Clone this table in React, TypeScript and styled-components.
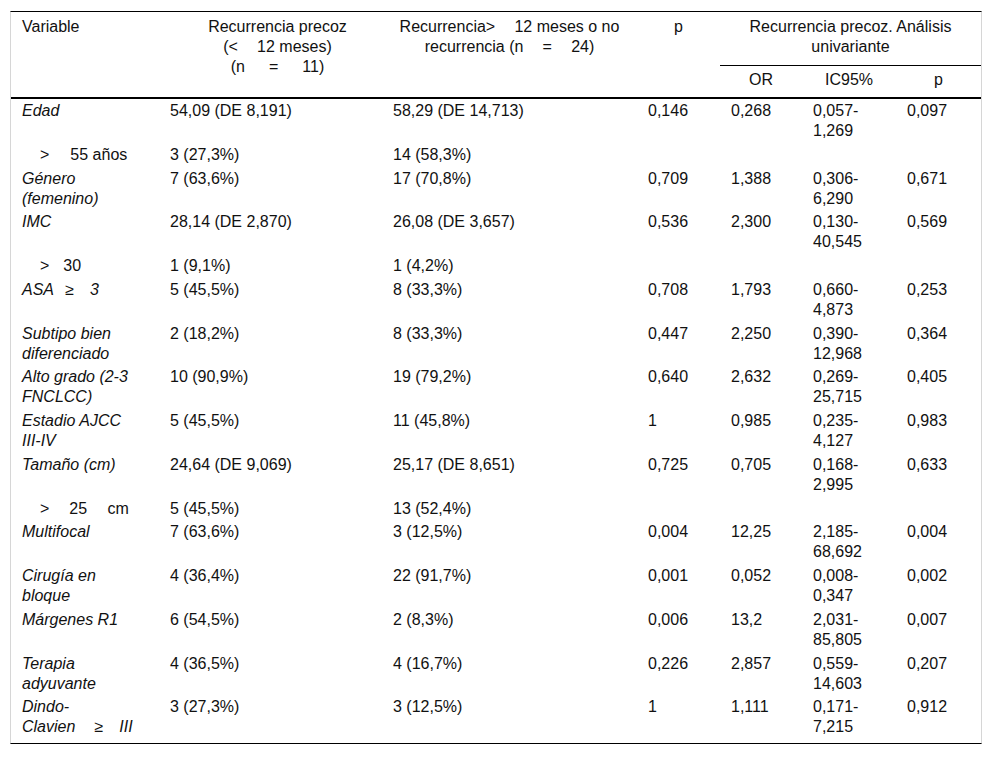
import React from "react";
import styled, { createGlobalStyle } from "styled-components";

const GlobalStyle = createGlobalStyle`
  body {
    margin: 0;
    background: #fff;
    font-family: "Liberation Sans", Arial, sans-serif;
    color: #111;
  }
`;

const Table = styled.table`
  margin: 11px 10px 0;
  width: 972px;
  table-layout: fixed;
  border-collapse: separate;
  border-spacing: 0;
  border-top: 1px solid #000;
  border-bottom: 1px solid #000;
  border-left: 1px solid #d6d6d6;
  border-right: 1px solid #d6d6d6;
  font-size: 16px;
  line-height: 20px;

  tbody tr:last-child td {
    padding-bottom: 6px;
  }
`;

const HeadCell = styled.th<{
  $align?: "left" | "center";
  $split?: boolean;
  $sub?: boolean;
  $shift?: number;
}>`
  font-weight: normal;
  text-align: ${(p) => p.$align || "center"};
  vertical-align: top;
  padding: ${(p) => (p.$sub ? "4px 11px 7px" : "5px 11px 8px")};
  padding-left: ${(p) => 11 + (p.$shift || 0)}px;
  border-bottom: ${(p) => (p.$split ? "1px solid #000" : "2px solid #000")};
  white-space: nowrap;
`;

const Cell = styled.td<{ $first?: boolean; $italic?: boolean }>`
  vertical-align: top;
  padding: ${(p) => (p.$first ? "2px 21px 1.75px 11px" : "2px 11px 1.75px")};
  font-style: ${(p) => (p.$italic ? "italic" : "normal")};
`;

const Indent = styled.span<{ $gap: number }>`
  padding-left: 18px;
  & > b {
    font-weight: normal;
    margin-right: ${(p) => p.$gap}px;
  }
`;

type Row = {
  label: React.ReactNode;
  italic: boolean;
  a: string;
  b: string;
  p?: string;
  or?: string;
  ic?: [string, string];
  p2?: string;
};

const rows: Row[] = [
  { label: "Edad", italic: true, a: "54,09 (DE 8,191)", b: "58,29 (DE 14,713)", p: "0,146", or: "0,268", ic: ["0,057-", "1,269"], p2: "0,097" },
  { label: <Indent $gap={21}><b>&gt;</b>55 años</Indent>, italic: false, a: "3 (27,3%)", b: "14 (58,3%)" },
  { label: "Género (femenino)", italic: true, a: "7 (63,6%)", b: "17 (70,8%)", p: "0,709", or: "1,388", ic: ["0,306-", "6,290"], p2: "0,671" },
  { label: "IMC", italic: true, a: "28,14 (DE 2,870)", b: "26,08 (DE 3,657)", p: "0,536", or: "2,300", ic: ["0,130-", "40,545"], p2: "0,569" },
  { label: <Indent $gap={14}><b>&gt;</b>30</Indent>, italic: false, a: "1 (9,1%)", b: "1 (4,2%)" },
  { label: "ASA\u2002\u2009≥\u2002\u20023", italic: true, a: "5 (45,5%)", b: "8 (33,3%)", p: "0,708", or: "1,793", ic: ["0,660-", "4,873"], p2: "0,253" },
  { label: "Subtipo bien diferenciado", italic: true, a: "2 (18,2%)", b: "8 (33,3%)", p: "0,447", or: "2,250", ic: ["0,390-", "12,968"], p2: "0,364" },
  { label: "Alto grado (2-3 FNCLCC)", italic: true, a: "10 (90,9%)", b: "19 (79,2%)", p: "0,640", or: "2,632", ic: ["0,269-", "25,715"], p2: "0,405" },
  { label: "Estadio AJCC III-IV", italic: true, a: "5 (45,5%)", b: "11 (45,8%)", p: "1", or: "0,985", ic: ["0,235-", "4,127"], p2: "0,983" },
  { label: "Tamaño (cm)", italic: true, a: "24,64 (DE 9,069)", b: "25,17 (DE 8,651)", p: "0,725", or: "0,705", ic: ["0,168-", "2,995"], p2: "0,633" },
  { label: <Indent $gap={20}><b>&gt;</b>25{"\u2002\u2002\u00a0"}cm</Indent>, italic: false, a: "5 (45,5%)", b: "13 (52,4%)" },
  { label: "Multifocal", italic: true, a: "7 (63,6%)", b: "3 (12,5%)", p: "0,004", or: "12,25", ic: ["2,185-", "68,692"], p2: "0,004" },
  { label: "Cirugía en bloque", italic: true, a: "4 (36,4%)", b: "22 (91,7%)", p: "0,001", or: "0,052", ic: ["0,008-", "0,347"], p2: "0,002" },
  { label: "Márgenes R1", italic: true, a: "6 (54,5%)", b: "2 (8,3%)", p: "0,006", or: "13,2", ic: ["2,031-", "85,805"], p2: "0,007" },
  { label: "Terapia adyuvante", italic: true, a: "4 (36,5%)", b: "4 (16,7%)", p: "0,226", or: "2,857", ic: ["0,559-", "14,603"], p2: "0,207" },
  { label: "Dindo-Clavien\u2002\u2002\u2009≥\u2002\u2002III", italic: true, a: "3 (27,3%)", b: "3 (12,5%)", p: "1", or: "1,111", ic: ["0,171-", "7,215"], p2: "0,912" },
];

export default function App() {
  return (
    <>
      <GlobalStyle />
      <Table>
        <colgroup>
          <col style={{ width: 148 }} />
          <col style={{ width: 223 }} />
          <col style={{ width: 255 }} />
          <col style={{ width: 83 }} />
          <col style={{ width: 82 }} />
          <col style={{ width: 94 }} />
          <col style={{ width: 85 }} />
        </colgroup>
        <thead>
          <tr>
            <HeadCell rowSpan={2} $align="left">Variable</HeadCell>
            <HeadCell rowSpan={2} $shift={14}>
              Recurrencia precoz
              <br />
              (&lt;{"\u2003\u2009"}12 meses)
              <br />
              (n{"\u2003\u2002"}={"\u2003\u2002"}11)
            </HeadCell>
            <HeadCell rowSpan={2}>
              Recurrencia&gt;{"\u2003\u2009"}12 meses o no
              <br />
              recurrencia (n{"\u2003\u2009"}={"\u2003\u2009"}24)
            </HeadCell>
            <HeadCell rowSpan={2}>p</HeadCell>
            <HeadCell colSpan={3} $split>
              Recurrencia precoz. Análisis
              <br />
              univariante
            </HeadCell>
          </tr>
          <tr>
            <HeadCell $sub>OR</HeadCell>
            <HeadCell $sub>IC95%</HeadCell>
            <HeadCell $sub>p</HeadCell>
          </tr>
        </thead>
        <tbody>
          {rows.map((r, i) => (
            <tr key={i}>
              <Cell $first $italic={r.italic}>{r.label}</Cell>
              <Cell>{r.a}</Cell>
              <Cell>{r.b}</Cell>
              <Cell>{r.p}</Cell>
              <Cell>{r.or}</Cell>
              <Cell>
                {r.ic && (
                  <>
                    {r.ic[0]}
                    <br />
                    {r.ic[1]}
                  </>
                )}
              </Cell>
              <Cell>{r.p2}</Cell>
            </tr>
          ))}
        </tbody>
      </Table>
    </>
  );
}
